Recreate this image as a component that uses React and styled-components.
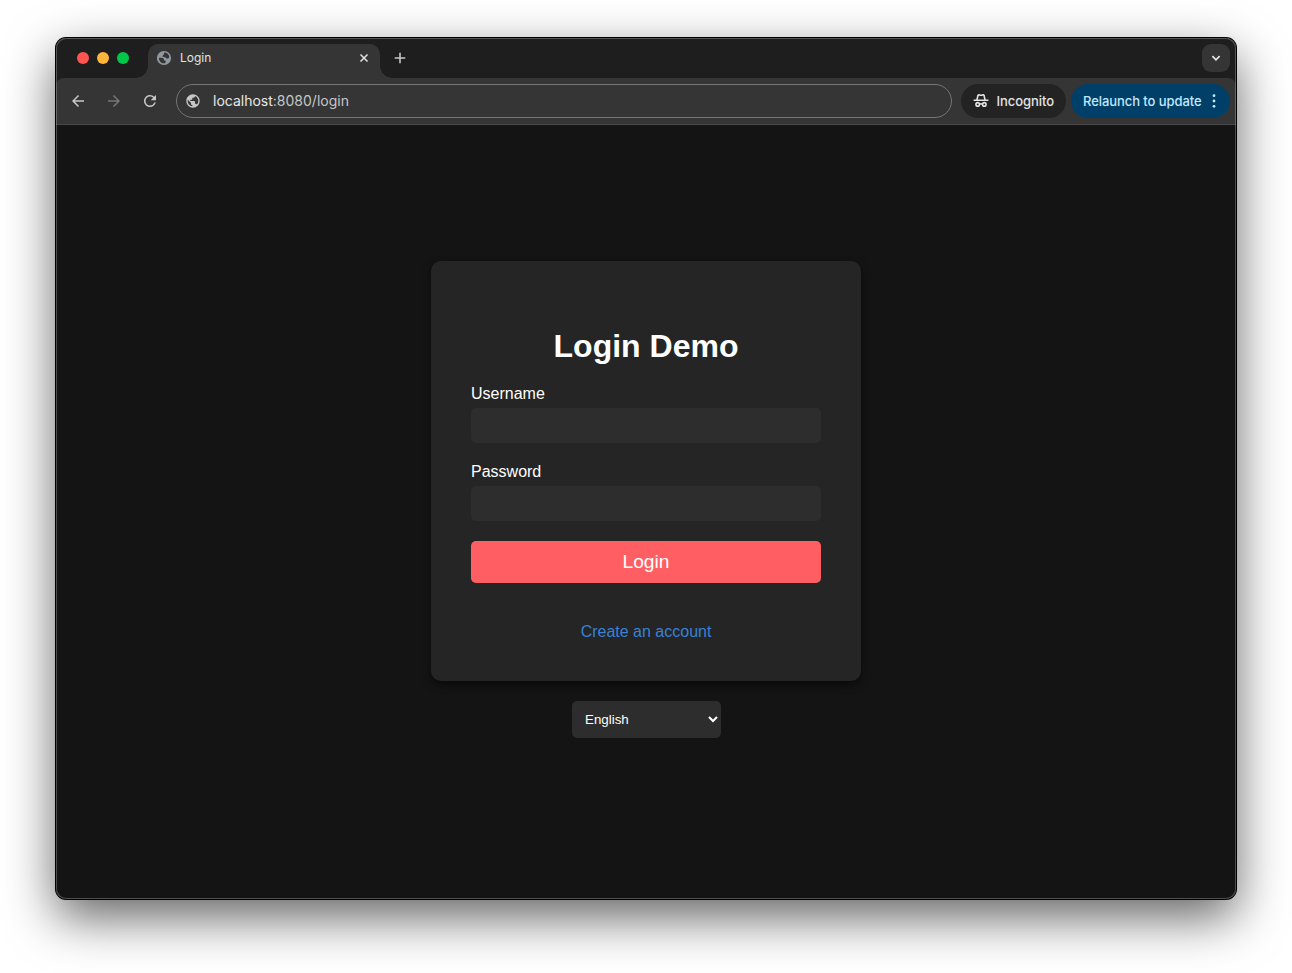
import React from "react";
import styled, { createGlobalStyle } from "styled-components";
import { MdPublic, MdArrowBack, MdArrowForward, MdRefresh } from "react-icons/md";

const GlobalStyle = createGlobalStyle`
  * { box-sizing: border-box; }
  body { margin: 0; background: #fff; }
`;

const Desktop = styled.div`
  height: 973px;
  padding: 38px 56px 74px;
  overflow: hidden;
  background: #fff;
`;

const Window = styled.div`
  position: relative;
  display: flex;
  flex-direction: column;
  height: 861px;
  border-radius: 10px;
  overflow: hidden;
  background: #141414;
  font-family: Inter, "Liberation Sans", sans-serif;

  &::after {
    content: "";
    position: absolute;
    inset: 0;
    border-radius: 10px;
    box-shadow: inset 0 0 0 1px rgba(255, 255, 255, 0.25);
    pointer-events: none;
  }
`;

const WindowShadow = styled.div`
  border-radius: 10px;
  box-shadow: 0 0 0 1px #000, 0 18px 50px rgba(0, 0, 0, 0.62), 0 0 2px rgba(0, 0, 0, 0.1);
`;

const TabStrip = styled.div`
  display: flex;
  align-items: center;
  height: 40px;
  flex: none;
  padding-right: 6px;
  background: #1e1e1e;
`;

const TrafficLights = styled.div`
  display: flex;
  gap: 8px;
  padding-left: 21px;
  width: 92px;
`;

const Light = styled.span`
  width: 12px;
  height: 12px;
  border-radius: 50%;
  background: ${(p) => p.$color};
`;

const Tab = styled.div`
  position: relative;
  align-self: flex-end;
  display: flex;
  align-items: center;
  width: 232px;
  height: 34px;
  padding: 0 11px 6px 8px;
  border-radius: 10px 10px 0 0;
  background: #353535;
  color: #e3e3e3;
  font-size: 12px;

  &::before,
  &::after {
    content: "";
    position: absolute;
    bottom: 0;
    width: 12px;
    height: 12px;
  }
  &::before {
    right: 100%;
    background: radial-gradient(circle at 0 0, transparent 11.5px, #353535 12px);
  }
  &::after {
    left: 100%;
    background: radial-gradient(circle at 100% 0, transparent 11.5px, #353535 12px);
  }
`;

const TabTitle = styled.span`
  flex: 1;
  margin-left: 8px;
  line-height: 16px;
`;

const NewTab = styled.button`
  display: flex;
  margin-left: 14px;
  padding: 0;
  border: 0;
  background: none;
  color: #c7c7c7;
`;

const TabSearch = styled.button`
  display: flex;
  align-items: center;
  justify-content: center;
  width: 28px;
  height: 28px;
  margin-left: auto;
  padding: 0;
  border: 0;
  border-radius: 9px;
  background: #353535;
  color: #e3e3e3;
`;

const ToolbarBack = styled.div`
  flex: none;
  background: #1e1e1e;
`;

const Toolbar = styled.div`
  display: flex;
  align-items: center;
  height: 47px;
  padding: 0 6px 0 13px;
  border-bottom: 1px solid #474747;
  border-radius: 8px 8px 0 0;
  background: #353535;
`;

const NavButton = styled.button`
  display: flex;
  margin-right: 18px;
  padding: 0;
  border: 0;
  background: none;
  color: ${(p) => (p.$dim ? "#757575" : "#c7c7c7")};
`;

const AddressBar = styled.div`
  display: flex;
  align-items: center;
  gap: 12px;
  flex: 1;
  height: 34px;
  margin: 0 9px 0 -1px;
  padding-left: 8px;
  border: 1px solid #757575;
  border-radius: 17px;
  color: #c7c7c7;
  font-size: 14px;
  line-height: 20px;
`;

const Host = styled.span`
  color: #e8e8e8;
`;

const Chip = styled.button`
  display: flex;
  align-items: center;
  justify-content: space-between;
  height: 34px;
  width: ${(p) => p.$width}px;
  margin-left: ${(p) => p.$gap || 0}px;
  padding: 0 ${(p) => p.$end || 12}px 0 12px;
  border: 0;
  border-radius: 17px;
  background: ${(p) => p.$bg};
  color: ${(p) => p.$fg};
  font: 500 13px Inter, sans-serif;
  letter-spacing: -0.07px;
  white-space: nowrap;
`;

const Page = styled.main`
  display: flex;
  flex: 1;
  flex-direction: column;
  align-items: center;
  justify-content: center;
  gap: 20px;
  padding: 24px 0 50px;
  background: #141414;
  color: #fff;
  font-family: "Liberation Sans", Arial, sans-serif;
`;

const Card = styled.form`
  width: 430px;
  height: 420px;
  padding: 40px;
  border-radius: 10px;
  background: #252525;
  box-shadow: 0 4px 8px rgba(0, 0, 0, 0.5);
`;

const Title = styled.h1`
  margin: 27px 0 20px;
  font-size: 32px;
  line-height: 37px;
  text-align: center;
`;

const Field = styled.label`
  display: block;
  margin-bottom: 20px;
  font-size: 16px;
  line-height: 18px;
`;

const Input = styled.input`
  display: block;
  width: 100%;
  height: 35px;
  margin-top: 5px;
  border: 0;
  border-radius: 5px;
  background: #2d2d2d;
  color: #fff;
`;

const Submit = styled.button`
  display: block;
  width: 100%;
  height: 42px;
  border: 0;
  border-radius: 5px;
  background: #ff5f63;
  color: #fff;
  font: 19.2px/22px "Liberation Sans", Arial, sans-serif;
`;

const CreateLink = styled.a`
  display: block;
  margin-top: 40px;
  color: #3582d8;
  font-size: 16px;
  line-height: 18px;
  text-align: center;
  text-decoration: none;
`;

const Language = styled.select`
  width: 149px;
  height: 37px;
  padding: 0 0 0 9px;
  margin-left: 1px;
  border: 0;
  border-radius: 5px;
  background: #2d2d2d;
  color: #fff;
  font: 13.333px "Liberation Sans", Arial, sans-serif;
`;

const Stroke = ({ size, d, width = 1.6 }) => (
  <svg width={size} height={size} viewBox={`0 0 ${size} ${size}`} fill="none" stroke="currentColor" strokeWidth={width}>
    <path d={d} />
  </svg>
);

const FaviconGlobe = () => (
  <svg width="16" height="16" viewBox="0 0 16 16">
    <circle cx="8" cy="8" r="7.1" fill="#9298a0" />
    <path
      fill="#353535"
      d="M8.4 2.6C11.2 2.6 13.3 4.9 13.3 7.3c-.5.9-1.500 1.400-2.400 1.200-.9-.2-.9-1.100-1.700-1.300-.9-.2-2.300.2-2.700-.7-.3-.9.600-1.400 1.200-1.800.5-.5.100-1.400.7-2.100zM2.900 7.700h2.500c1.500 0 2.600.8 2.600 2 0 .7.300.9 1 .9.600 0 .8.400.7 1l-.4 1.600c-3.500.9-6.400-1.800-6.400-5.500z"
    />
  </svg>
);

const IncognitoIcon = () => (
  <svg width="16" height="16" viewBox="0 0 16 16" fill="none" stroke="currentColor" strokeWidth="1.6">
    <path d="M.6 7.3h14.800" />
    <path d="M3.900 7.100 5 2.300q.2-.7.9-.5l1.400.4q.7.200 1.400 0l1.400-.4q.7-.2.9.5l1.100 4.800" />
    <circle cx="4.700" cy="11.400" r="1.750" />
    <circle cx="11.300" cy="11.400" r="1.750" />
    <path d="M6.500 11.200q1.500-.8 3 0" />
  </svg>
);

const DotsIcon = () => (
  <svg width="4" height="16" viewBox="0 0 4 16" fill="currentColor">
    <circle cx="2" cy="2.700" r="1.400" />
    <circle cx="2" cy="8" r="1.400" />
    <circle cx="2" cy="13.300" r="1.400" />
  </svg>
);

export default function App() {
  return (
    <Desktop>
      <GlobalStyle />
      <WindowShadow>
        <Window>
          <TabStrip>
            <TrafficLights>
              <Light $color="#ff5450" />
              <Light $color="#ffb43c" />
              <Light $color="#00c748" />
            </TrafficLights>
            <Tab>
              <FaviconGlobe />
              <TabTitle>Login</TabTitle>
              <Stroke size={10} width={1.5} d="M1.500 1.500l7 7M8.500 1.500L1.500 8.500" />
            </Tab>
            <NewTab aria-label="New tab">
              <Stroke size={12} d="M6 .700v10.600M.700 6h10.600" />
            </NewTab>
            <TabSearch aria-label="Search tabs">
              <Stroke size={10} width={1.8} d="M1.400 3.200L5 6.800l3.600-3.600" />
            </TabSearch>
          </TabStrip>
          <ToolbarBack>
            <Toolbar>
              <NavButton aria-label="Back"><MdArrowBack size={18} /></NavButton>
              <NavButton aria-label="Forward" $dim><MdArrowForward size={18} /></NavButton>
              <NavButton aria-label="Reload"><MdRefresh size={18} /></NavButton>
              <AddressBar>
                <MdPublic size={16} />
                <span><Host>localhost</Host>:8080/login</span>
              </AddressBar>
              <Chip $bg="#232323" $fg="#e3e3e3" $width={105}>
                <IncognitoIcon />
                Incognito
              </Chip>
              <Chip $bg="#004068" $fg="#c2e7ff" $width={159} $gap={5} $end={14}>
                Relaunch to update
                <DotsIcon />
              </Chip>
            </Toolbar>
          </ToolbarBack>
          <Page>
            <Card onSubmit={(e) => e.preventDefault()}>
              <Title>Login Demo</Title>
              <Field>Username<Input /></Field>
              <Field>Password<Input type="password" /></Field>
              <Submit>Login</Submit>
              <CreateLink href="#">Create an account</CreateLink>
            </Card>
            <Language defaultValue="en" aria-label="Language">
              <option value="en">English</option>
            </Language>
          </Page>
        </Window>
      </WindowShadow>
    </Desktop>
  );
}
